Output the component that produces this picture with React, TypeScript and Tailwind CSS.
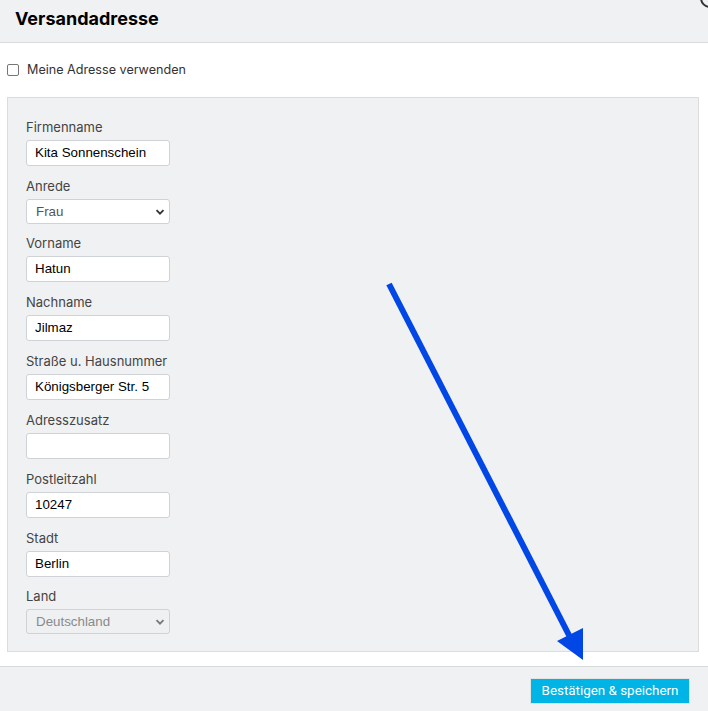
import React from "react";

const inter = { fontFamily: "Inter, 'Noto Sans', sans-serif" };
const arial = { fontFamily: "'Liberation Sans', Arial, sans-serif" };

function Label({ children }: { children: React.ReactNode }) {
  return (
    <label className="block text-[13px] leading-[17px] h-[17px] text-[#444]" style={inter}>
      {children}
    </label>
  );
}

function Field({ label, value }: { label: string; value: string }) {
  return (
    <div className="flex flex-col mb-[12px]">
      <Label>{label}</Label>
      <div className="mt-[4px] w-[144px] h-[26px] bg-white border border-[#cfd2d6] rounded-[3px] flex items-center px-[8px] text-[13.33px] text-black" style={arial}>
        {value}
      </div>
    </div>
  );
}

function Select({ label, value, disabled }: { label: string; value: string; disabled?: boolean }) {
  return (
    <div className="flex flex-col mb-[11px]">
      <Label>{label}</Label>
      <div
        className={`mt-[4px] w-[144px] h-[25px] border border-[#cfd2d6] rounded-[3px] flex items-center justify-between pl-[9px] pr-[4px] text-[13.33px] ${disabled ? "bg-[#eef0f2] text-[#8a8a8a]" : "bg-white text-[#555]"}`}
        style={arial}
      >
        <span>{value}</span>
        <svg width="10" height="10" viewBox="0 0 10 10">
          <path d="M1.5 3.2 L5 6.7 L8.5 3.2" fill="none" stroke={disabled ? "#777" : "#333"} strokeWidth="1.8" />
        </svg>
      </div>
    </div>
  );
}

export default function App() {
  return (
    <div className="relative w-[708px] h-[711px] bg-white overflow-hidden" style={inter}>
      <div className="h-[43px] bg-[#f0f1f3] border-b border-[#d9dadc] flex items-center pl-[15px]">
        <h1 className="text-[18px] font-bold text-black leading-none -mt-[5px]">Versandadresse</h1>
      </div>
      <div className="absolute right-[-12px] top-[-12px] w-[20px] h-[20px] rounded-full border-[2px] border-[#333]" />

      <div className="h-[54px] flex items-center pl-[7px]">
        <div className="w-[12px] h-[12px] border border-[#767676] rounded-[2px] bg-white" />
        <span className="ml-[8px] text-[12.6px] text-[#333]">Meine Adresse verwenden</span>
      </div>

      <div className="ml-[7px] w-[692px] h-[555px] bg-[#f0f1f3] border border-[#dcdcdc] pl-[18px] pt-[21px] flex flex-col">
        <Field label="Firmenname" value="Kita Sonnenschein" />
        <Select label="Anrede" value="Frau" />
        <Field label="Vorname" value="Hatun" />
        <Field label="Nachname" value="Jilmaz" />
        <Field label="Straße u. Hausnummer" value="Königsberger Str. 5" />
        <Field label="Adresszusatz" value="" />
        <Field label="Postleitzahl" value="10247" />
        <div className="-mb-[1px]"><Field label="Stadt" value="Berlin" /></div>
        <Select label="Land" value="Deutschland" disabled />
      </div>

      <div className="mt-[14px] h-[46px] bg-[#f0f1f3] border-t border-[#d9dadc] flex items-start justify-end pr-[18px] pt-[11px]">
        <button className="w-[160px] h-[26px] bg-[#00b4e6] border border-[#e3e3e3] text-white text-[13.4px] flex items-center justify-center" style={{ fontFamily: "Roboto, Inter, sans-serif" }}>
          Bestätigen &amp; speichern
        </button>
      </div>

      <svg className="absolute left-0 top-0 pointer-events-none" width="708" height="711">
        <line x1="389" y1="284" x2="573" y2="643" stroke="#0047e6" strokeWidth="6" />
        <polygon points="557,641 583,628 583,660" fill="#0047e6" />
      </svg>
    </div>
  );
}
